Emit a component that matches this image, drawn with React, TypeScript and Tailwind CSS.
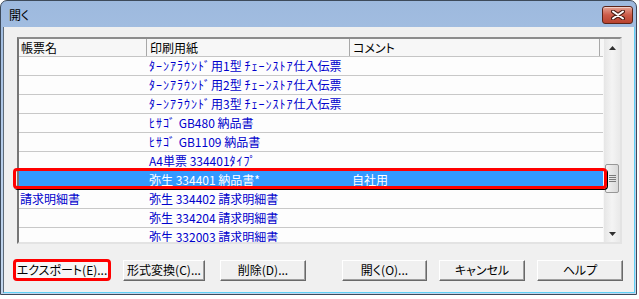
import React from 'react';

type Row = { name: string; paper: string; comment: string; selected?: boolean };

const ROWS: Row[] = [
  { name: '', paper: 'ﾀｰﾝｱﾗｳﾝﾄﾞ用1型 ﾁｪｰﾝｽﾄｱ仕入伝票', comment: '' },
  { name: '', paper: 'ﾀｰﾝｱﾗｳﾝﾄﾞ用2型 ﾁｪｰﾝｽﾄｱ仕入伝票', comment: '' },
  { name: '', paper: 'ﾀｰﾝｱﾗｳﾝﾄﾞ用3型 ﾁｪｰﾝｽﾄｱ仕入伝票', comment: '' },
  { name: '', paper: 'ﾋｻｺﾞ GB480 納品書', comment: '' },
  { name: '', paper: 'ﾋｻｺﾞ GB1109 納品書', comment: '' },
  { name: '', paper: 'A4単票 334401ﾀｲﾌﾟ', comment: '' },
  { name: '', paper: '弥生 334401 納品書*', comment: '自社用', selected: true },
  { name: '請求明細書', paper: '弥生 334402 請求明細書', comment: '' },
  { name: '', paper: '弥生 334204 請求明細書', comment: '' },
  { name: '', paper: '弥生 332003 請求明細書', comment: '' },
];

// half-width katakana is a bit wider in the original dialog font
const Cell: React.FC<{ text: string }> = ({ text }) => (
  <>
    {text.split(/([\uFF61-\uFF9F]+)/).map((part, i) =>
      /[\uFF61-\uFF9F]/.test(part) ? (
        <span key={i} className="tracking-[1px]">{part}</span>
      ) : (
        <React.Fragment key={i}>{part}</React.Fragment>
      )
    )}
  </>
);

const Btn: React.FC<{ label: string; w: string }> = ({ label, w }) => (
  <button
    type="button"
    className={`${w} h-[21px] bg-[#f0f0f0] border border-t-white border-l-white border-r-[#696969] border-b-[#696969] shadow-[inset_-1px_-1px_0_#a0a0a0] text-[12px] leading-none text-black flex items-center justify-center`}
  >
    {label}
  </button>
);

const App: React.FC = () => {
  return (
    <div className="w-[639px] h-[299px] bg-white font-['Noto_Sans_CJK_JP',sans-serif] [font-feature-settings:'palt'] text-[12px] overflow-hidden">
      <div className="w-[637px] h-[295px] flex flex-col rounded-t-[7px] border border-[#3d4a5a] bg-gradient-to-b from-[#9db9de] via-[#b6cdea] to-[#c3d7ee]">
        {/* title bar */}
        <div className="h-[26px] flex items-center justify-between pl-[8px] pr-[3px]">
          <span className="text-[12px] text-black pt-[2px]">開く</span>
          <div className="w-[31px] h-[18px] mt-[2px] rounded-[3px] border border-[#5b2318] bg-gradient-to-b from-[#e4a294] via-[#cc5c4a] to-[#b8422e] shadow-[inset_0_1px_0_rgba(255,255,255,0.5)] flex items-center justify-center">
            <svg width="14" height="10" viewBox="0 0 14 10">
              <path d="M2 1.5 L12 8.5 M12 1.5 L2 8.5" stroke="#4a1d14" strokeWidth="4" strokeLinecap="round" />
              <path d="M2 1.5 L12 8.5 M12 1.5 L2 8.5" stroke="#ffffff" strokeWidth="2" strokeLinecap="round" />
            </svg>
          </div>
        </div>

        {/* client */}
        <div className="relative flex-1 ml-[2px] mr-[1px] mb-[1px] bg-[#f0f0f0] border-l border-l-[#5f6b78] border-r border-r-[#5fd0f5] border-b border-b-[#5fd0f5] flex flex-col">
          {/* list */}
          <div className="mt-[10px] ml-[13px] w-[605px] h-[207px] border-2 border-t-[#8c8c8c] border-l-[#767676] border-b-[#e3e3e3] border-r-[#e3e3e3] bg-[#fdfdfd] flex">
            <div className="flex-1 flex flex-col overflow-hidden">
              <div className="h-[18px] shrink-0 flex bg-[#f7f7f7] border-b border-[#c5c5c5] text-black">
                <div className="w-[128px] border-r border-[#a8a8a8] pl-[2px] leading-[17px]">帳票名</div>
                <div className="w-[203px] border-r border-[#a8a8a8] pl-[3px] leading-[17px]">印刷用紙</div>
                <div className="w-[250px] border-r border-[#a8a8a8] pl-[3px] leading-[17px]">コメント</div>
                <div className="flex-1" />
              </div>
              {ROWS.map((r, i) => (
                <div
                  key={i}
                  className={`h-[19px] shrink-0 flex border-b border-[#c8c8c8] leading-[18px] [font-feature-settings:normal] ${r.selected ? 'bg-[#3399ff] text-white' : 'text-[#0000cc]'}`}
                >
                  <div className="w-[128px] pl-[1px] whitespace-nowrap">{r.name}</div>
                  <div className="w-[203px] pl-[2px] whitespace-nowrap"><Cell text={r.paper} /></div>
                  <div className="flex-1 pl-[2px] whitespace-nowrap">{r.comment}</div>
                </div>
              ))}
            </div>
            {/* scrollbar */}
            <div className="w-[17px] flex flex-col bg-gradient-to-r from-[#e6e6e6] via-[#f4f4f4] to-[#e9e9e9] border-l border-[#f7f7f7]">
              <div className="h-[17px] flex items-center justify-center">
                <svg width="7" height="4" viewBox="0 0 7 4"><path d="M0 4 L3.5 0 L7 4 Z" fill="#303030" /></svg>
              </div>
              <div className="h-[108px]" />
              <div className="h-[29px] mx-[1px] rounded-[2px] border border-[#979797] bg-gradient-to-r from-[#f3f3f3] to-[#d9d9d9] flex flex-col items-center justify-center gap-[1px]">
                <div className="w-[7px] h-[1px] bg-[#7a7a7a]" />
                <div className="w-[7px] h-[1px] bg-[#7a7a7a]" />
                <div className="w-[7px] h-[1px] bg-[#7a7a7a]" />
                <div className="w-[7px] h-[1px] bg-[#7a7a7a]" />
              </div>
              <div className="flex-1" />
              <div className="h-[17px] flex items-center justify-center">
                <svg width="7" height="4" viewBox="0 0 7 4"><path d="M0 0 L3.5 4 L7 0 Z" fill="#303030" /></svg>
              </div>
            </div>
          </div>

          {/* red annotation around selected row */}
          <div className="absolute left-[9px] top-[141px] w-[594px] h-[21px] rounded-[4px] border-[3px] border-[#ff0000] shadow-[1px_1px_0_#000]" />

          {/* buttons */}
          <div className="mt-[15px] flex items-center justify-between pl-[9px] pr-[11px]">
            <div className="flex items-center">
              <div className="w-[98px] h-[22px] rounded-[4px] border-[3px] border-[#ff0000] bg-[#f7f7f7] flex items-center justify-center text-black leading-none">
                エクスポート(E)...
              </div>
              <div className="ml-[12px]"><Btn label="形式変換(C)..." w="w-[82px]" /></div>
              <div className="ml-[15px]"><Btn label="削除(D)..." w="w-[86px]" /></div>
            </div>
            <div className="flex items-center gap-[12px]">
              <Btn label="開く(O)..." w="w-[85px]" />
              <Btn label="キャンセル" w="w-[86px]" />
              <Btn label="ヘルプ" w="w-[86px]" />
            </div>
          </div>
        </div>
      </div>
    </div>
  );
};

export default App;
